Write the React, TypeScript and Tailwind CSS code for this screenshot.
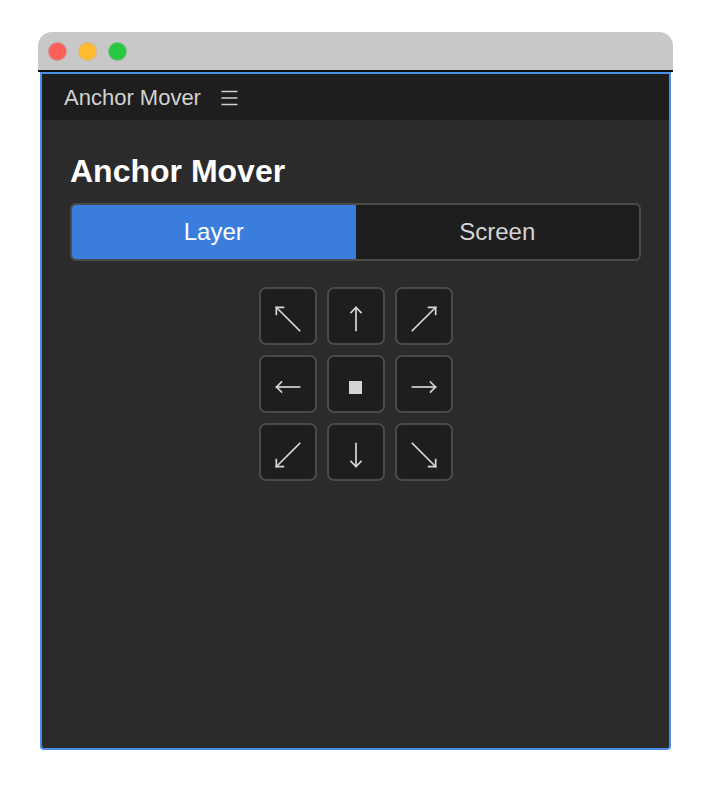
import React from 'react';

type Dir = 'nw' | 'n' | 'ne' | 'w' | 'c' | 'e' | 'sw' | 's' | 'se';

const DIRS: Dir[] = ['nw', 'n', 'ne', 'w', 'c', 'e', 'sw', 's', 'se'];

// rotation of an "up" arrow for each direction
const ROT: Record<Dir, number> = {
  n: 0, ne: 45, e: 90, se: 135, s: 180, sw: 225, w: 270, nw: 315, c: 0,
};

function Arrow({ dir }: { dir: Dir }) {
  if (dir === 'c') {
    return <div className="mt-[6px] h-[13px] w-[13px] bg-[#d6d6d6]" />;
  }
  const diag = dir.length === 2;
  // diagonals are a bit longer so their x/y extent matches the reference
  const len = diag ? 16.5 : 11.5;
  return (
    <svg width="40" height="40" viewBox="-20 -20 40 40" className="mt-[5px]">
      <g transform={`rotate(${ROT[dir]})`} stroke="#d6d6d6" strokeWidth="1.7" fill="none" strokeLinecap="square">
        <path d={`M0 ${len} V${-len}`} />
        <path d={`M-5 ${-len + 5} L0 ${-len} L5 ${-len + 5}`} strokeLinejoin="miter" />
      </g>
    </svg>
  );
}

export default function App() {
  return (
    <div className="min-h-screen bg-white pl-[38px] pt-[32px]" style={{ fontFamily: '"Liberation Sans", Arial, sans-serif' }}>
      <div className="w-[635px]">
        {/* title bar */}
        <div className="flex h-[38px] items-center gap-[13px] rounded-t-[14px] bg-[#c8c8c9] pl-[11px]">
          <span className="h-[17px] w-[17px] rounded-full bg-[#fe5f57] ring-1 ring-[#e0443e]/40" />
          <span className="h-[17px] w-[17px] rounded-full bg-[#febc2e] ring-1 ring-[#dea123]/40" />
          <span className="h-[17px] w-[17px] rounded-full bg-[#28c840] ring-1 ring-[#1aab29]/40" />
        </div>
        <div className="h-[2px] bg-[#111]" />

        {/* panel */}
        <div className="mx-[2px] flex h-[678px] flex-col overflow-hidden rounded-b-[4px] border-2 border-[#4a8ee6] bg-[#2b2b2b]">
          <div className="flex h-[46px] items-center bg-[#1e1e1e] pl-[22px]">
            <span className="text-[22px] text-[#d2d2d2]">Anchor Mover</span>
            <svg width="17" height="16" viewBox="0 0 17 16" className="ml-[20px] mt-[1px]">
              <g stroke="#cfcfcf" strokeWidth="1.6">
                <path d="M0.5 1.5 H16.5" />
                <path d="M0.5 8 H16.5" />
                <path d="M0.5 14.5 H16.5" />
              </g>
            </svg>
          </div>

          <div className="px-[28px] pt-[33px]">
            <h1 className="text-[32px] font-bold leading-[36px] text-white">Anchor Mover</h1>

            <div className="mt-[14px] flex h-[58px] overflow-hidden rounded-[6px] border-2 border-[#4a4a4a] bg-[#1e1e1e]">
              <button className="flex flex-1 items-center justify-center bg-[#3b7ddd] text-[24px] text-white">Layer</button>
              <button className="flex flex-1 items-center justify-center text-[24px] text-[#d4d4d4]">Screen</button>
            </div>

            <div className="mt-[26px] flex justify-center">
              <div className="grid grid-cols-3 gap-[10px]">
                {DIRS.map(d => (
                  <button
                    key={d}
                    className="flex h-[58px] w-[58px] items-center justify-center rounded-[7px] border-2 border-[#4a4a4a] bg-[#1e1e1e]"
                  >
                    <Arrow dir={d} />
                  </button>
                ))}
              </div>
            </div>
          </div>
        </div>
      </div>
    </div>
  );
}
